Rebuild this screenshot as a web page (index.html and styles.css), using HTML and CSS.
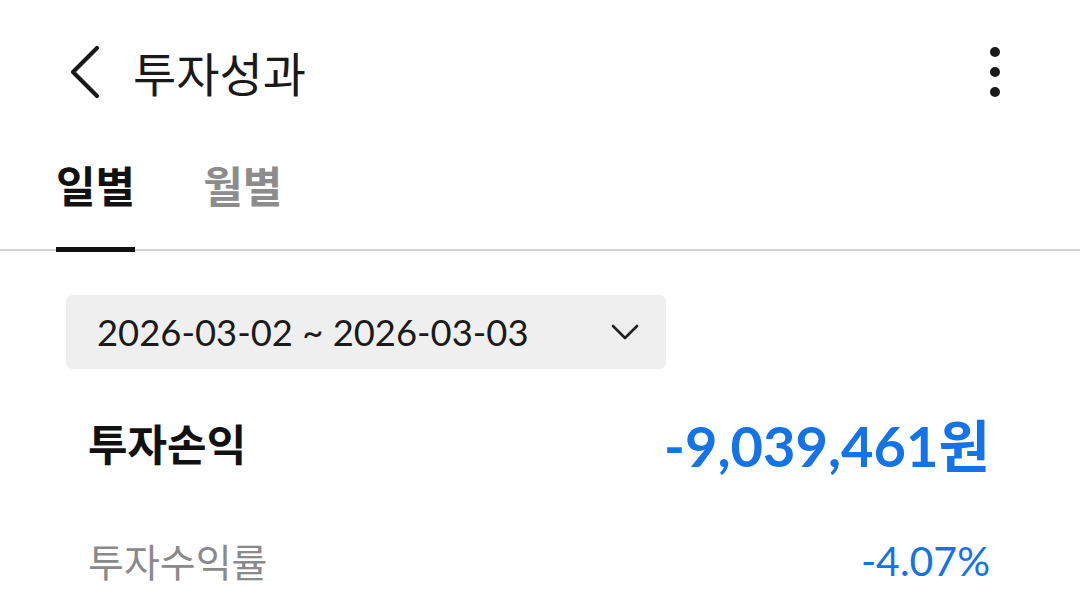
FILE: index.html
```html
<!DOCTYPE html>
<html lang="ko">
<head>
    <meta charset="UTF-8">
    <meta name="viewport" content="width=device-width, initial-scale=1.0">
    <title>투자성과</title>
    <link rel="stylesheet" href="styles.css">
</head>
<body>
    <div class="topbar">
        <button class="back" aria-label="뒤로">
            <svg width="34" height="56" viewBox="0 0 34 56">
                <polyline points="29,4 5,28 29,52" fill="none" stroke="#1a1a1a" stroke-width="4.2" stroke-linecap="round" stroke-linejoin="round"/>
            </svg>
        </button>
        <h1 class="title">투자성과</h1>
        <button class="more" aria-label="더보기">
            <span class="dot"></span>
            <span class="dot"></span>
            <span class="dot"></span>
        </button>
    </div>

    <div class="tabs">
        <div class="tab active">일별</div>
        <div class="tab">월별</div>
    </div>

    <div class="content">
        <div class="period">
            <span class="period-text">2026-03-02 ~ 2026-03-03</span>
            <svg width="30" height="18" viewBox="0 0 30 18">
                <polyline points="3,3 15,15 27,3" fill="none" stroke="#222" stroke-width="2.6" stroke-linecap="round" stroke-linejoin="round"/>
            </svg>
        </div>

        <div class="row main">
            <span class="label">투자손익</span>
            <span class="value">-9,039,461원</span>
        </div>

        <div class="row sub">
            <span class="label">투자수익률</span>
            <span class="value">-4.07%</span>
        </div>
    </div>
</body>
</html>
```

FILE: styles.css
```css
body {
    margin: 0;
    padding: 0;
    background: #fff;
    color: #1a1a1a;
    font-family: Lato, "Noto Sans CJK KR", sans-serif;
}

button {
    background: none;
    border: none;
    padding: 0;
    cursor: pointer;
}

.topbar {
    height: 144px;
    display: flex;
    align-items: center;
    padding: 0 73px 0 68px;
}

.back {
    width: 36px;
    height: 56px;
    display: flex;
    align-items: center;
}

.title {
    flex: 1;
    margin: 0 0 0 29px;
    font-family: "Noto Sans CJK KR", sans-serif;
    font-size: 47px;
    font-weight: 400;
    line-height: 56px;
    color: #1a1a1a;
}

.more {
    display: flex;
    flex-direction: column;
    align-items: center;
    gap: 10px;
    width: 24px;
}

.dot {
    width: 10px;
    height: 10px;
    border-radius: 50%;
    background: #1a1a1a;
}

.tabs {
    display: flex;
    gap: 68px;
    padding-left: 56px;
    border-bottom: 2px solid #d2d2d2;
}

.tab {
    font-family: "Noto Sans CJK KR", sans-serif;
    font-size: 43px;
    font-weight: 700;
    line-height: 48px;
    padding: 16px 0 39px;
    margin-bottom: -3px;
    border-bottom: 5px solid transparent;
    color: #8c8c8c;
}

.tab.active {
    color: #111;
    border-bottom-color: #111;
}

.content {
    padding: 44px 90px 0 66px;
}

.period {
    width: 600px;
    height: 74px;
    box-sizing: border-box;
    background: #efefef;
    border-radius: 6px;
    display: flex;
    align-items: center;
    justify-content: space-between;
    padding: 0 26px 0 31px;
}

.period-text {
    font-size: 36.4px;
    color: #1a1a1a;
}

.row {
    display: flex;
    justify-content: space-between;
    align-items: center;
    padding-left: 22px;
}

.row.main {
    height: 80px;
    margin-top: 33px;
}

.row.sub {
    height: 80px;
    margin-top: 38px;
}

.label {
    font-family: "Noto Sans CJK KR", sans-serif;
}

.main .label {
    font-size: 43px;
    font-weight: 700;
    color: #111;
}

.main .value {
    font-size: 56px;
    font-weight: 700;
    color: #1473e6;
}

.sub .label {
    font-size: 39px;
    color: #8a8a8a;
}

.sub .value {
    font-size: 41px;
    color: #1473e6;
}
```
